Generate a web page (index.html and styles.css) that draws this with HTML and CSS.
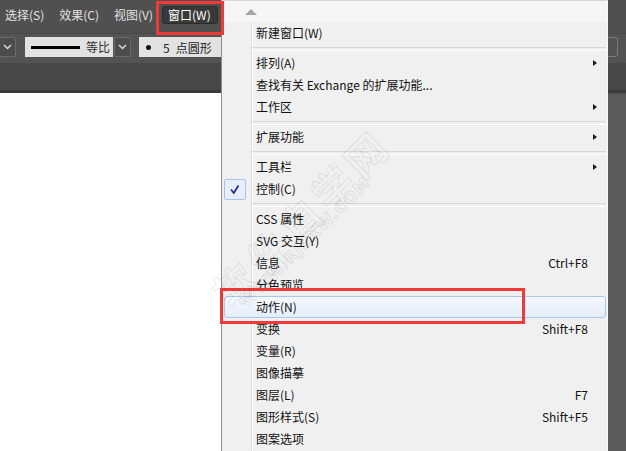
FILE: index.html
```html
<!DOCTYPE html>
<html lang="zh-CN">
<head>
<meta charset="utf-8">
<title>窗口菜单</title>
<link rel="stylesheet" href="styles.css">
</head>
<body>
<div class="app">
  <div class="menubar">
    <span class="mi first">选择(S)</span>
    <span class="mi">效果(C)</span>
    <span class="mi">视图(V)</span>
    <span class="mi active">窗口(W)</span>
  </div>
  <div class="ctrlbar">
    <div class="dd first"><svg width="9" height="6" viewBox="0 0 9 6"><path d="M1 1 L4.5 4.5 L8 1" fill="none" stroke="#d8d8d8" stroke-width="1.5"/></svg></div>
    <div class="stroke"><span class="sline"></span><span class="slbl">等比</span></div>
    <div class="dd"><svg width="9" height="6" viewBox="0 0 9 6"><path d="M1 1 L4.5 4.5 L8 1" fill="none" stroke="#d8d8d8" stroke-width="1.5"/></svg></div>
    <div class="brush"><span class="dot"></span><span class="num">5</span><span class="bname">点圆形</span></div>
    <div class="spacer"></div>
    <div class="rbtn"></div>
  </div>
  <div class="tabbar"></div>
  <div class="work">
    <div class="canvas"></div>
    <div class="side"></div>
  </div>
</div>

<div class="menu">
  <div class="scroll"><span class="up"></span></div>
  <div class="mbody">
    <div class="row"><span class="ico"></span><span class="lbl">新建窗口(W)</span><span class="sc"></span><span class="tail"></span></div>
    <div class="sep"></div>
    <div class="row"><span class="ico"></span><span class="lbl">排列(A)</span><span class="sc"></span><span class="tail"><i class="arr"></i></span></div>
    <div class="row"><span class="ico"></span><span class="lbl">查找有关 Exchange 的扩展功能...</span><span class="sc"></span><span class="tail"></span></div>
    <div class="row"><span class="ico"></span><span class="lbl">工作区</span><span class="sc"></span><span class="tail"><i class="arr"></i></span></div>
    <div class="sep"></div>
    <div class="row"><span class="ico"></span><span class="lbl">扩展功能</span><span class="sc"></span><span class="tail"><i class="arr"></i></span></div>
    <div class="sep"></div>
    <div class="row"><span class="ico"></span><span class="lbl">工具栏</span><span class="sc"></span><span class="tail"><i class="arr"></i></span></div>
    <div class="row"><span class="ico checked"><svg width="20" height="19" viewBox="0 0 20 19"><path d="M6 9.5 L8.8 13 L13.5 5.5" fill="none" stroke="#1d2b8c" stroke-width="1.7"/></svg></span><span class="lbl">控制(C)</span><span class="sc"></span><span class="tail"></span></div>
    <div class="sep"></div>
    <div class="row"><span class="ico"></span><span class="lbl">CSS 属性</span><span class="sc"></span><span class="tail"></span></div>
    <div class="row"><span class="ico"></span><span class="lbl">SVG 交互(Y)</span><span class="sc"></span><span class="tail"></span></div>
    <div class="row"><span class="ico"></span><span class="lbl">信息</span><span class="sc">Ctrl+F8</span><span class="tail"></span></div>
    <div class="row"><span class="ico"></span><span class="lbl">分色预览</span><span class="sc"></span><span class="tail"></span></div>
    <div class="row hl"><span class="ico"></span><span class="lbl">动作(N)</span><span class="sc"></span><span class="tail"></span></div>
    <div class="row"><span class="ico"></span><span class="lbl">变换</span><span class="sc">Shift+F8</span><span class="tail"></span></div>
    <div class="row"><span class="ico"></span><span class="lbl">变量(R)</span><span class="sc"></span><span class="tail"></span></div>
    <div class="row"><span class="ico"></span><span class="lbl">图像描摹</span><span class="sc"></span><span class="tail"></span></div>
    <div class="row"><span class="ico"></span><span class="lbl">图层(L)</span><span class="sc">F7</span><span class="tail"></span></div>
    <div class="row"><span class="ico"></span><span class="lbl">图形样式(S)</span><span class="sc">Shift+F5</span><span class="tail"></span></div>
    <div class="row"><span class="ico"></span><span class="lbl">图案选项</span><span class="sc"></span><span class="tail"></span></div>
  </div>
</div>

<div class="anno anno-menu"></div>
<div class="anno anno-item"></div>

<div class="wm wm-big">软件自学网</div>
<div class="wm wm-url">WWW.RJZXW.COM</div>
</body>
</html>
```

FILE: styles.css
```css
* { box-sizing: border-box; }
html, body { margin: 0; padding: 0; }
body {
  width: 626px;
  height: 451px;
  overflow: hidden;
  position: relative;
  background: #ffffff;
  font-family: "Noto Sans CJK SC", "Microsoft YaHei", sans-serif;
  font-size: 12px;
}

.app { display: flex; flex-direction: column; height: 451px; }

/* top menu bar */
.menubar {
  height: 33px;
  background: #505050;
  display: flex;
  align-items: flex-start;
  gap: 2px;
  padding-top: 6px;
}
.mi {
  height: 18px;
  line-height: 15px;
  padding: 0 6px 0 5px;
  border: 1px solid transparent;
  border-radius: 3px;
  color: #e2e2e2;
  white-space: nowrap;
}
.mi.first { margin-left: -1px; }
.mi.active { background: #393939; border-color: #2b2b2b; color: #ffffff; }

/* control bar */
.ctrlbar {
  height: 30px;
  background: #535353;
  border-top: 1px solid #464646;
  display: flex;
  align-items: flex-start;
  padding-top: 3px;
}
.dd {
  width: 17px;
  height: 20px;
  border: 1px solid #6a6a6a;
  border-radius: 2px;
  background: #4c4c4c;
  display: flex;
  align-items: center;
  justify-content: center;
  margin-left: 1px;
}
.dd.first { margin-left: -1px; }
.stroke {
  width: 88px;
  height: 20px;
  margin-left: 9px;
  background: #e2e2e2;
  display: flex;
  align-items: center;
  padding-left: 6px;
}
.sline { width: 49px; height: 3px; background: #000; }
.slbl { margin-left: 6px; color: #333; line-height: 20px; }
.brush {
  width: 83px;
  height: 20px;
  margin-left: 8px;
  background: #e2e2e2;
  display: flex;
  align-items: center;
  padding-left: 7px;
  color: #222;
}
.dot { width: 5px; height: 5px; border-radius: 50%; background: #111; }
.num { margin-left: 12px; }
.bname { margin-left: 6px; }
.spacer { flex: 1; }
.rbtn {
  width: 22px;
  height: 20px;
  margin-right: 8px;
  border: 1px solid #7a7a7a;
  border-radius: 3px;
}

.tabbar {
  height: 30px;
  background: #474747;
  border-bottom: 3px solid #3b3b3b;
}

.work { flex: 1; display: flex; }
.canvas { flex: 1; background: #ffffff; }
.side { width: 18px; background: #5a5a5a; border-top: 1px solid #505050; }

/* dropdown window menu */
.menu {
  position: absolute;
  left: 221px;
  top: 0;
  width: 387px;
  height: 460px;
  background: #f0f0f0;
  border-left: 1px solid #8e8e8e;
  border-right: 1px solid #f9f9f9;
  border-top: 1px solid #d8d8d8;
}
.scroll {
  height: 21px;
  background: #f6f6f6;
  padding-left: 23px;
  padding-top: 8px;
}
.up {
  display: block;
  width: 0;
  height: 0;
  border-left: 6px solid transparent;
  border-right: 6px solid transparent;
  border-bottom: 6px solid #a6a6a6;
}
.mbody {
  background-image: linear-gradient(to right, transparent 29px, #dedede 29px, #dedede 30px, #ffffff 30px, #ffffff 31px, transparent 31px);
}
.row {
  height: 22px;
  margin: 0 1px 0 2px;
  border: 1px solid transparent;
  border-radius: 3px;
  display: flex;
  align-items: center;
  color: #111;
  white-space: nowrap;
}
.row.hl {
  border-color: #a9c8f0;
  background: linear-gradient(#f6f9fe, #e5edf9);
}
.ico {
  width: 22px;
  height: 21px;
  margin-left: -1px;
  flex: none;
  display: flex;
  align-items: center;
  justify-content: center;
}
.ico.checked {
  border: 1px solid #a6c4ee;
  border-radius: 2px;
  background: #e7eefa;
}
.lbl { margin-left: 10px; flex: 1; line-height: 20px; }
.sc { line-height: 20px; }
.tail { width: 17px; flex: none; padding-left: 5px; display: flex; align-items: center; }
.arr {
  display: block;
  width: 0;
  height: 0;
  border-top: 3.5px solid transparent;
  border-bottom: 3.5px solid transparent;
  border-left: 4px solid #1a1a1a;
}
.sep {
  height: 8px;
  margin: 0 1px 0 30px;
  padding-top: 3px;
}
.sep::after {
  content: "";
  display: block;
  height: 2px;
  border-top: 1px solid #d7d7d7;
  border-bottom: 1px solid #ffffff;
}

/* red annotation boxes */
.anno {
  position: absolute;
  border: 3px solid #f03a3a;
}
.anno-menu { left: 156px; top: 1px; width: 68px; height: 34px; }
.anno-item { left: 220px; top: 288px; width: 305px; height: 36px; }

/* watermark */
.wm {
  position: absolute;
  transform-origin: 0 50%;
  transform: rotate(-45deg);
  white-space: nowrap;
  color: transparent;
  -webkit-text-stroke: 1px rgba(0, 0, 0, 0.1);
  font-weight: bold;
}
.wm-big {
  left: 220px;
  top: 278px;
  height: 40px;
  font-size: 40px;
  line-height: 40px;
  letter-spacing: 6px;
}
.wm-url {
  left: 243px;
  top: 296px;
  height: 18px;
  font-size: 16px;
  line-height: 18px;
  letter-spacing: 1px;
  font-family: "DejaVu Sans", sans-serif;
}
```
